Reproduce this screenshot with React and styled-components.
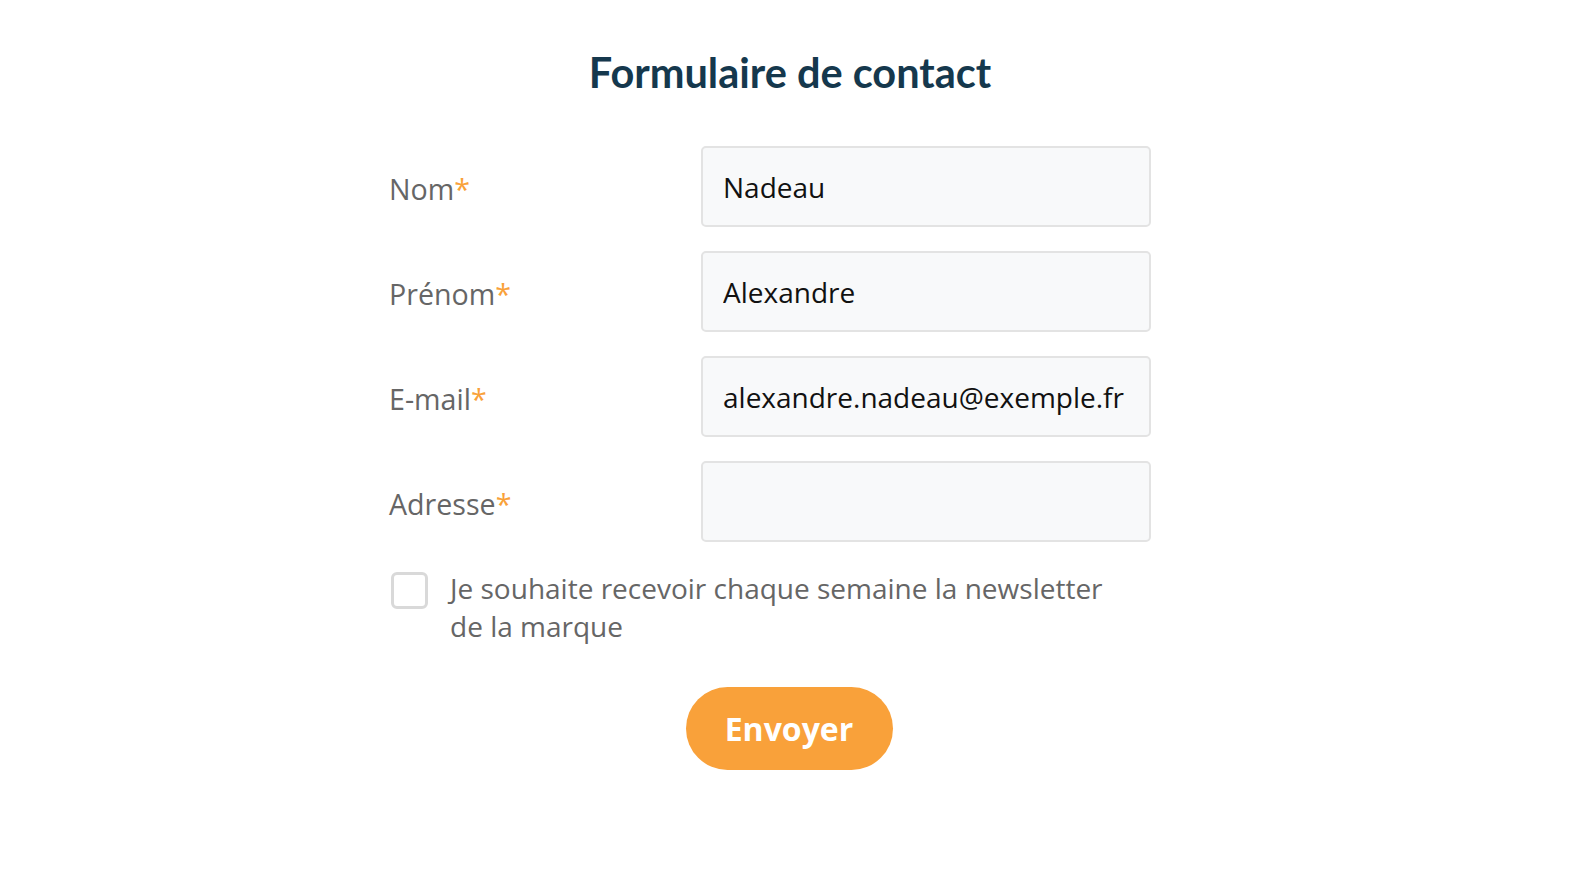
import styled, { createGlobalStyle } from "styled-components";

const GlobalStyle = createGlobalStyle`
  body {
    margin: 0;
    background: #ffffff;
    font-family: "Open Sans", "Liberation Sans", sans-serif;
  }
`;

const Page = styled.main`
  display: flex;
  flex-direction: column;
  align-items: center;
  padding-top: 47px;
`;

const Title = styled.h1`
  margin: 0 0 0 4px;
  font-family: "Lato", "Open Sans", sans-serif;
  font-weight: 700;
  font-size: 41.5px;
  line-height: 50px;
  color: #15384d;
`;

const Form = styled.form`
  width: 800px;
  margin: 49px 0 0 2px;
  display: flex;
  flex-direction: column;
`;

const Fields = styled.div`
  display: grid;
  grid-template-columns: 312px 450px;
  row-gap: 24px;
  align-items: center;
`;

const Label = styled.label`
  font-size: 28.6px;
  color: #666666;
  padding-top: 4px;
`;

const Required = styled.span`
  color: #f9a13a;
`;

const Input = styled.input`
  box-sizing: border-box;
  height: 81px;
  width: 100%;
  padding: 0 20px;
  border: 2px solid #e3e3e3;
  border-radius: 5px;
  background: #f8f9fa;
  font-family: "Open Sans", sans-serif;
  font-size: 28px;
  color: #111111;
  outline: none;
`;

const CheckRow = styled.label`
  display: flex;
  align-items: flex-start;
  gap: 22px;
  margin-top: 27px;
  font-size: 28px;
  line-height: 38px;
  color: #666666;
`;

const Box = styled.input`
  appearance: none;
  flex: none;
  box-sizing: border-box;
  width: 37px;
  height: 37px;
  margin: 3px 0 0 2px;
  border: 3px solid #d9d9d9;
  border-radius: 6px;
  background: #ffffff;
`;

const CheckText = styled.span`
  max-width: 660px;
`;

const Submit = styled.button`
  align-self: center;
  margin-top: 42px;
  margin-left: 0;
  width: 207px;
  height: 83px;
  border: none;
  border-radius: 42px;
  background: #f9a13a;
  color: #ffffff;
  font-family: "Open Sans", sans-serif;
  font-weight: 700;
  font-size: 32px;
  cursor: pointer;
`;

const fields = [
  { id: "nom", label: "Nom", value: "Nadeau" },
  { id: "prenom", label: "Prénom", value: "Alexandre" },
  { id: "email", label: "E-mail", value: "alexandre.nadeau@exemple.fr" },
  { id: "adresse", label: "Adresse", value: "" },
];

export default function App() {
  return (
    <>
      <GlobalStyle />
      <Page>
        <Title>Formulaire de contact</Title>
        <Form onSubmit={(e) => e.preventDefault()}>
          <Fields>
            {fields.map((f) => [
              <Label key={f.id + "-l"} htmlFor={f.id}>
                {f.label}
                <Required>*</Required>
              </Label>,
              <Input key={f.id} id={f.id} defaultValue={f.value} />,
            ])}
          </Fields>
          <CheckRow>
            <Box type="checkbox" />
            <CheckText>
              Je souhaite recevoir chaque semaine la newsletter de la marque
            </CheckText>
          </CheckRow>
          <Submit type="submit">Envoyer</Submit>
        </Form>
      </Page>
    </>
  );
}
